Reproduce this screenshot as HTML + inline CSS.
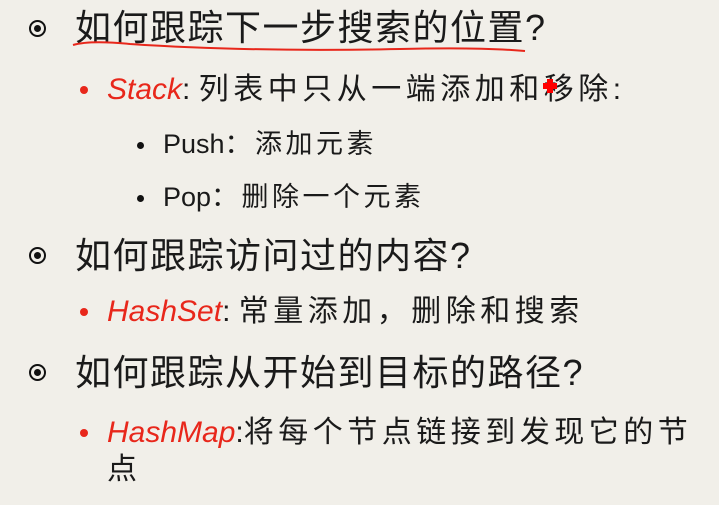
<!DOCTYPE html>
<html><head><meta charset="utf-8"><style>
html,body{margin:0;padding:0;}
body{width:719px;height:505px;background:#f1efe9;position:relative;overflow:hidden;font-family:"Liberation Sans","Noto Sans CJK SC",sans-serif;color:#1a1a1a;}
.l{position:absolute;white-space:nowrap;line-height:1;}
.r{color:#e8271b;font-style:italic;letter-spacing:0;}
.c{letter-spacing:4.5px;}
.h1{font-size:36px;letter-spacing:1.5px;left:75px;}
.h2{font-size:30px;left:107px;}
.h3{font-size:27px;left:163px;}
.h3 .c{letter-spacing:3.5px;}
.rb{position:absolute;width:8px;height:8px;border-radius:50%;background:#e8271b;}
.bb{position:absolute;width:7px;height:7px;border-radius:50%;background:#111;}
.ci{position:absolute;width:13px;height:13px;border:2.5px solid #111;border-radius:50%;}
.ci:after{content:"";position:absolute;left:3px;top:3px;width:7px;height:7px;border-radius:50%;background:#111;}
</style></head><body>
<div class="ci" style="left:29px;top:20px"></div>
<div class="l h1" style="top:10px">如何跟踪下一步搜索的位置?</div>
<div class="rb" style="left:80px;top:86px"></div>
<div class="l h2" style="top:75px"><span class="r">Stack</span>: <span class="c">列表中只从一端添加和移除</span>:</div>
<svg style="position:absolute;left:0;top:0" width="719" height="505"><path d="M73 45 Q90 40 130 44 Q250 52 400 49 Q480 47 525 51" stroke="#e8271b" stroke-width="2" fill="none"/><rect x="543" y="83" width="14" height="6" fill="#f00"/><rect x="547" y="79" width="6" height="14" fill="#f00"/></svg>
<div class="bb" style="left:137px;top:142px"></div>
<div class="l h3" style="top:131px">Push<span class="c">：添加元素</span></div>
<div class="bb" style="left:137px;top:195px"></div>
<div class="l h3" style="top:184px">Pop<span class="c">：删除一个元素</span></div>
<div class="ci" style="left:29px;top:247px"></div>
<div class="l h1" style="top:238px">如何跟踪访问过的内容?</div>
<div class="rb" style="left:80px;top:308px"></div>
<div class="l h2" style="top:297px"><span class="r">HashSet</span>: <span class="c">常量添加，删除和搜索</span></div>
<div class="ci" style="left:29px;top:364px"></div>
<div class="l h1" style="top:355px">如何跟踪从开始到目标的路径?</div>
<div class="rb" style="left:80px;top:429px"></div>
<div class="l h2" style="top:418px"><span class="r">HashMap</span>:<span class="c" style="letter-spacing:4.5px">将每个节点链接到发现它的节</span></div>
<div class="l h2" style="top:455px">点</div>
</body></html>
